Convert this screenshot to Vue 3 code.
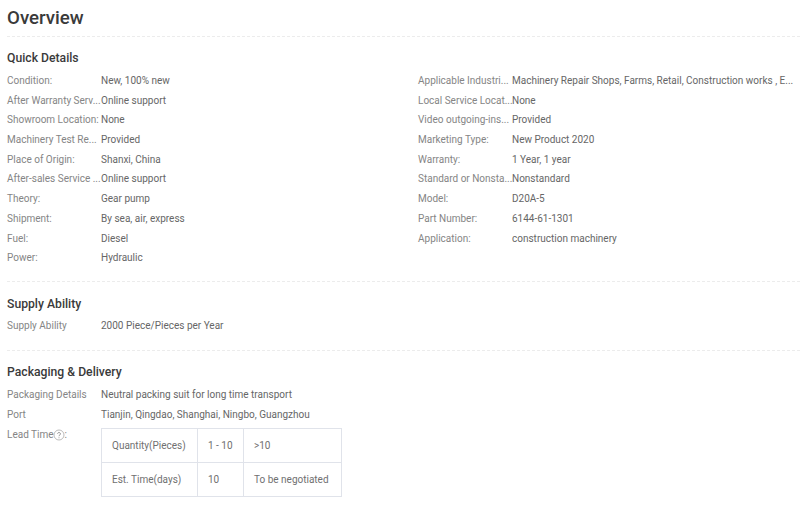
<script setup>
const left = [
  ['Condition:', 'New, 100% new'],
  ['After Warranty Serv...', 'Online support'],
  ['Showroom Location:', 'None'],
  ['Machinery Test Re...', 'Provided'],
  ['Place of Origin:', 'Shanxi, China'],
  ['After-sales Service ...', 'Online support'],
  ['Theory:', 'Gear pump'],
  ['Shipment:', 'By sea, air, express'],
  ['Fuel:', 'Diesel'],
  ['Power:', 'Hydraulic'],
]
const right = [
  ['Applicable Industri...', 'Machinery Repair Shops, Farms, Retail, Construction works , E...'],
  ['Local Service Locat...', 'None'],
  ['Video outgoing-ins...', 'Provided'],
  ['Marketing Type:', 'New Product 2020'],
  ['Warranty:', '1 Year, 1 year'],
  ['Standard or Nonsta...', 'Nonstandard'],
  ['Model:', 'D20A-5'],
  ['Part Number:', '6144-61-1301'],
  ['Application:', 'construction machinery'],
]
</script>

<template>
  <div class="page">
    <h1 class="title">Overview</h1>

    <section class="section first">
      <h2 class="heading">Quick Details</h2>
      <div class="columns">
        <div class="col">
          <div v-for="r in left" :key="r[0]" class="row">
            <span class="label">{{ r[0] }}</span><span class="value">{{ r[1] }}</span>
          </div>
        </div>
        <div class="col">
          <div v-for="r in right" :key="r[0]" class="row">
            <span class="label">{{ r[0] }}</span><span class="value">{{ r[1] }}</span>
          </div>
        </div>
      </div>
    </section>

    <section class="section second">
      <h2 class="heading">Supply Ability</h2>
      <div class="row">
        <span class="label">Supply Ability</span><span class="value">2000 Piece/Pieces per Year</span>
      </div>
    </section>

    <section class="section third">
      <h2 class="heading">Packaging &amp; Delivery</h2>
      <div class="row">
        <span class="label">Packaging Details</span><span class="value">Neutral packing suit for long time transport</span>
      </div>
      <div class="row">
        <span class="label">Port</span><span class="value">Tianjin, Qingdao, Shanghai, Ningbo, Guangzhou</span>
      </div>
      <div class="lead">
        <span class="label lead-label">Lead Time<svg class="help" width="12" height="12" viewBox="0 0 12 12"><circle cx="6" cy="6" r="5" fill="none" stroke="#aaa" stroke-width="0.8"/><path d="M4.6 4.8a1.4 1.4 0 1 1 2.3 1.1c-.6.4-.9.6-.9 1.3" fill="none" stroke="#888" stroke-width="0.9"/><circle cx="6" cy="8.7" r="0.5" fill="#888"/></svg>:</span>
        <table class="lead-table">
          <tbody>
            <tr><td class="c1">Quantity(Pieces)</td><td class="c2">1 - 10</td><td class="c3">&gt;10</td></tr>
            <tr><td class="c1">Est. Time(days)</td><td class="c2">10</td><td class="c3">To be negotiated</td></tr>
          </tbody>
        </table>
      </div>
    </section>
  </div>
</template>

<style scoped>
.page {
  width: 800px;
  height: 513px;
  overflow: hidden;
  box-sizing: border-box;
  padding: 0 0 0 7px;
  font-family: Roboto, "Liberation Sans", sans-serif;
  font-size: 10px;
  color: #666;
}
.title {
  margin: 0;
  height: 36px;
  line-height: 37px;
  font-size: 18.7px;
  font-weight: 500;
  color: #3a3a3a;
  border-bottom: 1px dashed #ececec;
}
.section { border-bottom: 1px dashed #ececec; }
.first { padding-top: 11px; height: 245px; box-sizing: border-box; }
.second { padding-top: 12px; height: 69px; box-sizing: border-box; }
.second .heading { margin-bottom: 2px; }
.third { border-bottom: 0; padding-top: 11px; }
.third .heading { margin-bottom: 3px; }
.heading {
  margin: 0 0 3px;
  height: 20px;
  line-height: 20px;
  font-size: 12.2px;
  font-weight: 500;
  color: #3a3a3a;
}
.columns { display: flex; }
.col { width: 411px; flex: none; }
.row {
  display: flex;
  height: 19.7px;
  line-height: 19.7px;
  white-space: nowrap;
}
.label { width: 94px; flex: none; color: #858585; }
.value { color: #666; }
.lead { display: flex; align-items: flex-start; }
.lead-label { display: flex; align-items: center; height: 20px; }
.help { margin-top: 2px; margin-left: -1px; }
.lead-table {
  border-collapse: collapse;
  table-layout: fixed;
  width: 240px;
  margin-top: 4px;
}
.lead-table td {
  border: 1px solid #e0e3ea;
  height: 34px;
  padding: 0 0 0 10px;
  box-sizing: border-box;
  color: #707070;
  white-space: nowrap;
}
.c1 { width: 96px; }
.c2 { width: 46px; }
.c3 { width: 98px; }
</style>
